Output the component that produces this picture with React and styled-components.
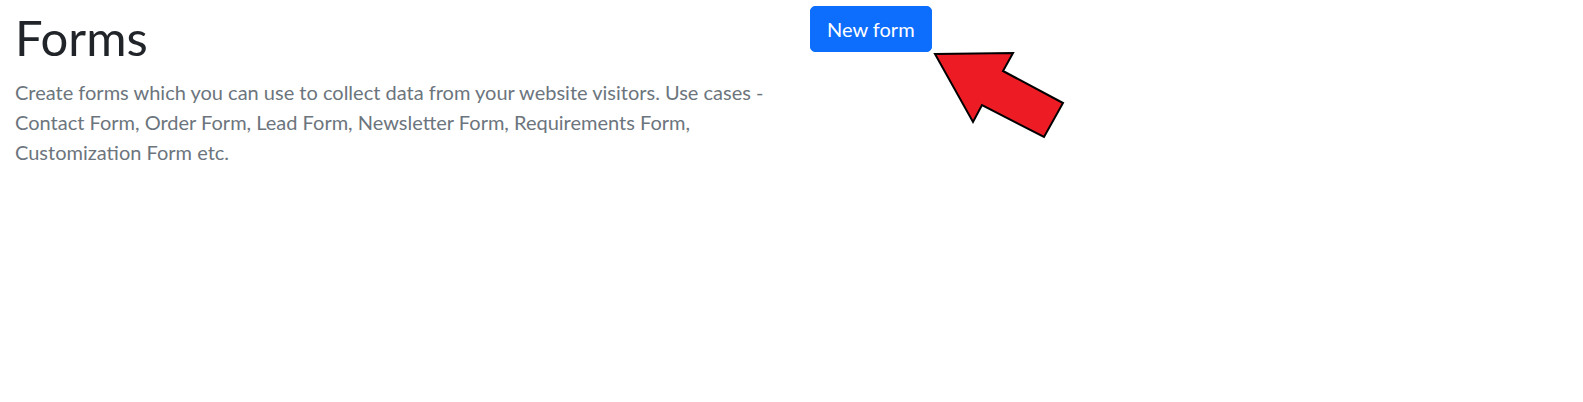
import React from 'react';
import styled, { createGlobalStyle } from 'styled-components';

const Global = createGlobalStyle`
  body {
    margin: 0;
    background: #fff;
    font-family: Lato, "Noto Sans", sans-serif;
  }
`;

const Row = styled.div`
  display: grid;
  grid-template-columns: 783px 1fr;
  padding: 0 0 0 15px;
`;

const Intro = styled.div`
  padding-right: 20px;
`;

const Title = styled.h1`
  margin: 8px 0 10px;
  font-size: 49px;
  font-weight: 400;
  line-height: 1.2;
  color: #212529;
`;

const Lead = styled.p`
  margin: 0;
  font-size: 20px;
  line-height: 30px;
  color: #6c757d;
`;

const Actions = styled.div`
  padding: 6px 0 0 12px;
  position: relative;
`;

const Button = styled.button`
  font-family: inherit;
  background: #0d6efd;
  color: #fff;
  border: 1px solid #0d6efd;
  border-radius: 5px;
  font-size: 20px;
  line-height: 30px;
  padding: 7px 16px;
  cursor: pointer;
`;

const Pointer = styled.svg`
  position: absolute;
  left: 122px;
  top: 40px;
`;

export default function App() {
  return (
    <>
      <Global />
      <Row>
        <Intro>
          <Title>Forms</Title>
          <Lead>
            Create forms which you can use to collect data from your website visitors. Use cases - Contact Form, Order Form, Lead Form, Newsletter Form, Requirements Form, Customization Form etc.
          </Lead>
        </Intro>
        <Actions>
          <Button>New form</Button>
          <Pointer width="150" height="110" viewBox="920 40 150 110">
            <polygon
              points="935,54 1013,53 1003,71 1063,103 1044,137 982,105 973,122"
              fill="#ed1c24"
              stroke="#000"
              strokeWidth="2"
              strokeLinejoin="miter"
            />
          </Pointer>
        </Actions>
      </Row>
    </>
  );
}
